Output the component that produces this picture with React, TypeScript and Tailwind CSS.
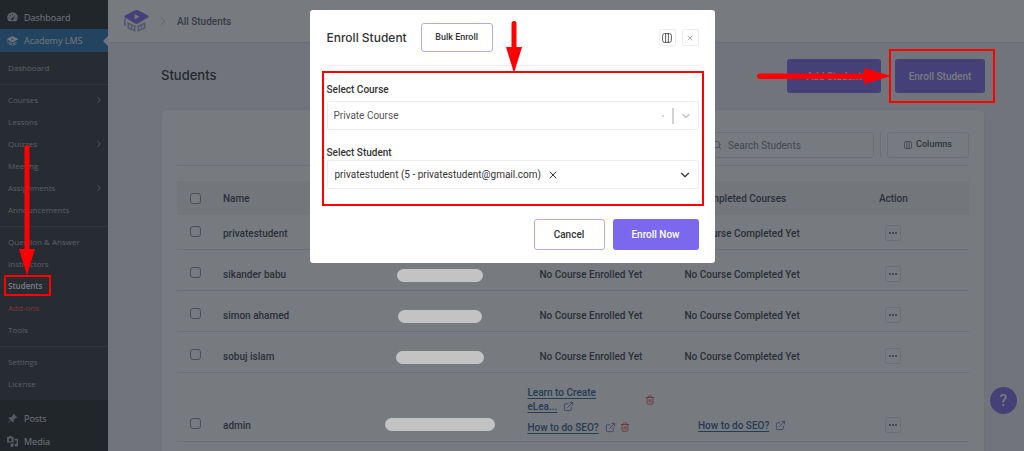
import { useState } from "react";
import { ChevronDown, ChevronRight, ExternalLink, Search, Trash2, X } from "lucide-react";

type MenuItem = { label: string; more?: boolean; current?: boolean; accent?: boolean };

const menuGroups: MenuItem[][] = [
	[{ label: "Dashboard" }],
	[
		{ label: "Courses", more: true },
		{ label: "Lessons" },
		{ label: "Quizzes", more: true },
		{ label: "Meeting" },
		{ label: "Assignments", more: true },
		{ label: "Announcements" },
	],
	[
		{ label: "Question & Answer" },
		{ label: "Instructors" },
		{ label: "Students", current: true },
		{ label: "Add-ons", accent: true },
		{ label: "Tools" },
	],
	[{ label: "Settings" }, { label: "License" }],
];

const students = [
	{ name: "privatestudent", mask: "", enrolled: "" },
	{ name: "sikander babu", mask: "w-[86px]", enrolled: "No Course Enrolled Yet" },
	{ name: "simon ahamed", mask: "w-[84px]", enrolled: "No Course Enrolled Yet" },
	{ name: "sobuj islam", mask: "w-[88px]", enrolled: "No Course Enrolled Yet" },
];

function Logo({ className, mono }: { className: string; mono?: boolean }) {
	const cap = mono ? "#f0f0f1" : "#7b68ee";
	const book = mono ? "#c3d3e3" : "#a9a8cc";
	return (
		<svg viewBox="0 0 25 22" className={className}>
			<path d="M10.5 0.6Q12.5-0.4 14.5 0.6L24 5.6Q25.4 6.6 24 7.6L14 13.4Q12.5 14.2 11 13.4L1 7.6Q-0.4 6.6 1 5.6Z" fill={cap} />
			<path d="M10.6 4 15.4 6.8 10.6 9.6Z" fill={mono ? "#2271b1" : "#fff"} />
			<path d="M0.9 8.5v7.5" stroke={cap} strokeWidth="1.1" />
			<path
				fillRule="evenodd"
				d="M3.5 12 11.6 15.8V21.8L3.5 18.6ZM5.3 14.6V17.4L7 18.1V15.4ZM8.4 16.1V18.7L10 19.3V16.9Z"
				fill={book}
			/>
			<path
				fillRule="evenodd"
				d="M13.4 15.8 21.5 12V18.6L13.4 21.8ZM15 16.9V19.3L16.7 18.7V16.1ZM18.1 15.4V18.1L19.8 17.4V14.6Z"
				fill={book}
			/>
		</svg>
	);
}

function ColumnsIcon({ className }: { className: string }) {
	return (
		<svg viewBox="0 0 10 10" className={className} fill="none" stroke="currentColor" strokeWidth="0.8">
			<rect x="0.6" y="0.6" width="8.8" height="8.8" rx="2" />
			<path d="M3.6 0.6v8.8M6.4 0.6v8.8" />
		</svg>
	);
}

function DownArrow({ className, height }: { className: string; height: number }) {
	return (
		<svg viewBox={`0 0 16 ${height}`} className={className} fill="#ff0000">
			<rect x="5.5" y="0" width="5" height={height - 20} rx="2.5" />
			<path d={`M0 ${height - 26}H16L8 ${height}Z`} />
		</svg>
	);
}

function Sidebar() {
	return (
		<aside className="w-[108px] shrink-0 bg-[#1d2327] pt-1.5 font-['Open_Sans','Noto_Sans',sans-serif] text-[#f0f0f1]">
			<a href="#" className="flex h-[23px] items-center gap-1.5 pl-[7px] text-[9px]">
				<svg viewBox="0 0 20 20" className="size-[11px] text-[#c3c4c7]" fill="currentColor">
					<path
						fillRule="evenodd"
						d="M3.8 17A9.5 9.5 0 1 1 16.2 17ZM10 3.5a1.2 1.2 0 1 0 0 2.4 1.2 1.2 0 0 0 0-2.4ZM5.5 5.4a1.2 1.2 0 1 0 0 2.4 1.2 1.2 0 0 0 0-2.4ZM3.6 9.8a1.2 1.2 0 1 0 0 2.4 1.2 1.2 0 0 0 0-2.4ZM16.4 9.8a1.2 1.2 0 1 0 0 2.4 1.2 1.2 0 0 0 0-2.4ZM15 5.5 9 11.2a2 2 0 1 0 2.4 2.4Z"
					/>
				</svg>
				Dashboard
			</a>
			<a href="#" className="relative flex h-[23px] items-center gap-1.5 bg-[#2271b1] pl-[7px] text-[9px]">
				<Logo className="h-[10px] w-[11px]" mono />
				Academy LMS
				<span className="absolute right-0 border-y-[5px] border-r-[5px] border-y-transparent border-r-[#f0f0f4]" />
			</a>

			<nav className="bg-[#2c3338] pt-px text-[8px] text-[#b4b7ba]">
				{menuGroups.map((group, i) => (
					<ul key={i} className="border-b border-[#464b50] pt-1 pb-[5px] last:border-b-0">
						{group.map((item) => (
							<li key={item.label} className="relative">
								<a
									href="#"
									className={
										item.current
											? "flex h-[22px] items-center px-2 font-semibold text-white"
											: item.accent
												? "flex h-[22px] items-center px-2 text-[#f0553f]"
												: "flex h-[22px] items-center justify-between px-2"
									}
								>
									{item.label}
									{item.more && <ChevronRight className="-mr-1 size-2.5" strokeWidth={2} />}
								</a>
								{item.current && (
									<>
										<span className="absolute top-0 left-1 z-20 h-[21px] w-[47px] border-2 border-[#ff0000]" />
										<DownArrow height={130} className="absolute bottom-full left-[19px] z-20 h-[130px] w-4" />
									</>
								)}
							</li>
						))}
					</ul>
				))}
			</nav>

			<div className="pt-[7px] text-[9px]">
				<a href="#" className="flex h-[23px] items-center gap-1.5 pl-[7px]">
					<svg viewBox="0 0 20 20" className="size-[11px] text-[#a7aaad]" fill="currentColor">
						<path d="M10.4 3.2 12 1.5 18.5 8l-1.7 1.6-1.4-.3-3.2 3.2.2 3.3-1.5 1.5-3.6-3.6L2 18.5 1.5 18l4.8-5.3L2.7 9.1l1.5-1.5 3.3.2L10.7 4.6Z" />
					</svg>
					Posts
				</a>
				<a href="#" className="flex h-[23px] items-center gap-1.5 pl-[7px]">
					<svg viewBox="0 0 20 20" className="size-[11px] text-[#a7aaad]" fill="currentColor">
						<path fillRule="evenodd" d="M0 2h3l1-2h4l1 2h3v10H0ZM6 4a3 3 0 1 0 0 6 3 3 0 0 0 0-6Z" />
						<path d="M13.5 5H20v11.5a3 3 0 1 1-2.5-2.9V8h-4ZM12 13v4a3 3 0 1 1-2.5-2.9V13Z" />
					</svg>
					Media
				</a>
			</div>
		</aside>
	);
}

function CourseLink({ children }: { children: React.ReactNode }) {
	return (
		<a href="#" className="text-[#2c5a97]">
			<span className="underline underline-offset-2">{children}</span>
			<ExternalLink className="ml-1.5 inline size-[11px] text-[#6a6fc8]" strokeWidth={2} />
		</a>
	);
}

function MoreButton() {
	return (
		<button aria-label="More" className="inline-flex h-4 w-4 items-center justify-center gap-px rounded-xs border border-[#e2e2e8] align-bottom">
			<span className="size-0.5 rounded-full bg-[#555a68]" />
			<span className="size-0.5 rounded-full bg-[#555a68]" />
			<span className="size-0.5 rounded-full bg-[#555a68]" />
		</button>
	);
}

function Check({ label }: { label: string }) {
	return (
		<input
			type="checkbox"
			aria-label={label}
			className="mx-auto block size-[11px] appearance-none rounded-[3px] border border-[#8c8f94] bg-white"
		/>
	);
}

function Mask({ className }: { className: string }) {
	return <span className={`relative z-20 mx-auto block h-[13px] rounded-full bg-[#c3c3c3] ${className}`} />;
}

function StudentsTable() {
	return (
		<table className="mt-[15px] w-full table-fixed border-collapse text-center text-[10px] font-medium text-[#363c4a]">
			<thead>
				<tr className="h-[34px] bg-[#f3f4f7]">
					<th className="w-9"><Check label="Select all" /></th>
					<th className="pl-2.5 text-left font-medium">Name</th>
					<th className="font-medium" aria-label="Email" />
					<th className="font-medium" aria-label="Enrolled Courses" />
					<th className="font-medium">Completed Courses</th>
					<th className="font-medium">Action</th>
				</tr>
			</thead>
			<tbody>
				{students.map((student, i) => (
					<tr key={student.name} className={`border-b border-[#e2e4ea] align-bottom ${i === 0 ? "h-[34px]" : "h-[41px]"}`}>
						<td className="pb-3"><Check label={student.name} /></td>
						<td className="pb-2 pl-2.5 text-left">{student.name}</td>
						<td className="pb-2">{student.mask && <Mask className={student.mask} />}</td>
						<td className="pb-2">{student.enrolled}</td>
						<td className="pb-2">No Course Completed Yet</td>
						<td className="pb-2"><MoreButton /></td>
					</tr>
				))}
				<tr className="h-[69px] border-b border-[#e2e4ea] align-bottom">
					<td className="pb-3"><Check label="admin" /></td>
					<td className="pb-2 pl-2.5 text-left">admin</td>
					<td className="pb-2.5"><Mask className="w-[110px]" /></td>
					<td className="pb-1.5 pl-3 text-left">
						<div className="flex items-center">
							<div className="w-[118px] pr-8 leading-[14px]">
								<CourseLink>Learn to Create eLea...</CourseLink>
							</div>
							<Trash2 className="size-[10px] text-[#e0453c]" strokeWidth={2} />
						</div>
						<div className="mt-1.5 flex items-center gap-1">
							<CourseLink>How to do SEO?</CourseLink>
							<Trash2 className="size-[10px] text-[#e0453c]" strokeWidth={2} />
						</div>
					</td>
					<td className="pb-2"><CourseLink>How to do SEO?</CourseLink></td>
					<td className="pb-2"><MoreButton /></td>
				</tr>
			</tbody>
		</table>
	);
}

function EnrollModal() {
	const [course, setCourse] = useState("Private Course");

	return (
		<div className="fixed inset-0 z-10 flex items-start justify-center bg-[#23292e]/62 pt-2.5">
			<div role="dialog" aria-label="Enroll Student" className="w-[405px] rounded-[3px] bg-white pr-4 pb-[13px] pl-[17px] text-[#333]">
				{/* Header */}
				<div className="flex h-14 items-center border-b border-[#f0f0f3]">
					<h2 className="font-[Inter,sans-serif] text-[12px] font-medium">Enroll Student</h2>
					<button className="ml-3.5 h-[29px] w-[72px] rounded-[3px] border border-[#b3aaf5] text-[9px] font-medium">
						Bulk Enroll
					</button>
					<button aria-label="Columns" className="ml-auto flex size-[17px] items-center justify-center rounded-xs border border-[#ececf0]">
						<ColumnsIcon className="size-[10px]" />
					</button>
					<button aria-label="Close" className="ml-1.5 flex size-[17px] items-center justify-center rounded-xs border border-[#ececf0] text-[#777]">
						<X className="size-2" strokeWidth={2} />
					</button>
				</div>

				{/* Fields */}
				<div className="relative -mx-[5px] mt-[5px] h-[135px] border-2 border-[#ff0000] px-[3px] pt-2.5">
					<DownArrow height={52} className="absolute bottom-full left-[182px] h-[52px] w-4" />
					<label htmlFor="course" className="block text-[10px] leading-[14px] font-medium">Select Course</label>
					<div className="mt-1 flex h-[29px] items-center rounded-xs border border-[#ececf0]">
						<select
							id="course"
							value={course}
							onChange={(e) => setCourse(e.target.value)}
							className="grow appearance-none pl-1.5 text-[10px] text-[#555] outline-none"
						>
							<option>Private Course</option>
						</select>
						<span className="size-0.5 rounded-full bg-[#c9c9cf]" />
						<span className="ml-2 h-4 w-0.5 bg-[#cfd3de]" />
						<ChevronDown className="mx-1.5 size-3 text-[#c4c4c9]" strokeWidth={3} />
					</div>
					<label htmlFor="student" className="mt-4 block text-[10px] leading-[14px] font-medium">Select Student</label>
					<div className="flex h-[29px] items-center rounded-xs border border-[#ececf0]">
						<select id="student" className="field-sizing-content appearance-none pl-[7px] text-[10px] outline-none">
							<option>privatestudent (5 - privatestudent@gmail.com)</option>
						</select>
						<button aria-label="Remove student" className="ml-1.5">
							<X className="size-3" strokeWidth={2} />
						</button>
						<ChevronDown className="mr-1.5 ml-auto size-3.5" strokeWidth={2} />
					</div>
				</div>

				{/* Footer */}
				<div className="mt-[13px] flex justify-end gap-2 text-[10px] font-medium">
					<button className="h-[31px] w-[71px] rounded-[3px] border border-[#b3aaf5]">Cancel</button>
					<button className="h-[31px] w-[86px] rounded-[3px] bg-[#7b68ee] text-white">Enroll Now</button>
				</div>
			</div>
		</div>
	);
}

export default function App() {
	return (
		<div className="flex h-screen overflow-hidden bg-[#f0f0f4] font-[Roboto,sans-serif]">
			<Sidebar />

			<div className="min-w-0 grow">
				<header className="flex h-[43px] items-center border-b border-[#e2e4ea] bg-white pl-4 text-[10px] font-medium text-[#555b66]">
					<Logo className="h-[22px] w-[25px]" />
					<ChevronRight className="mx-[7px] size-3.5 text-[#8f939b]" strokeWidth={1} />
					<a href="#">All Students</a>
				</header>

				<main className="pr-[39px] pl-[53px]">
					<div className="flex items-center justify-between py-4">
						<h1 className="font-[Inter,sans-serif] text-[13px] font-medium text-[#222835]">Students</h1>
						<div className="flex gap-3.5 text-[10px] font-medium text-white">
							<button className="h-[34px] w-[94px] rounded-[3px] bg-[#7b68ee]">Add Student</button>
							<div className="relative">
								<button className="h-[34px] w-[90px] rounded-[3px] bg-[#7b68ee]">Enroll Student</button>
								<span className="absolute -inset-y-2.5 -right-2.5 -left-1.5 z-20 border-2 border-[#ff0000]" />
								<svg viewBox="0 0 134 16" className="absolute top-[9px] right-full z-20 mr-1 h-4 w-[134px]" fill="#ff0000">
									<rect x="0" y="5.5" width="112" height="5.5" rx="2.7" />
									<path d="M107 0V16L134 8Z" />
								</svg>
							</div>
						</div>
					</div>

					<section className="rounded-md border border-[#e8e9ee] bg-white px-[15px] pt-[22px] pb-10">
						<div className="flex items-center justify-end border-b border-[#e8e9ee] pb-[7px]">
							<label className="flex h-[26px] w-[167px] items-center gap-1.5 rounded-[3px] border border-[#e2e4ea] px-1 text-[#777c88]">
								<Search className="size-2.5 shrink-0" />
								<input
									type="text"
									placeholder="Search Students"
									aria-label="Search Students"
									className="min-w-0 grow text-[10px] outline-none placeholder:text-[#777c88]"
								/>
							</label>
							<span className="mx-1.5 h-[26px] w-px bg-[#e2e4ea]" />
							<button className="flex h-[26px] w-[82px] items-center justify-center gap-1 rounded-[3px] border border-[#e2e4ea] text-[9px] font-medium text-[#444a57]">
								<ColumnsIcon className="size-2" />
								Columns
							</button>
						</div>
						<StudentsTable />
					</section>
				</main>
			</div>

			<button
				aria-label="Help"
				className="fixed right-[7px] bottom-[37px] flex size-[27px] items-center justify-center rounded-full bg-[#7b68ee] text-[16px] font-medium text-white"
			>
				?
			</button>

			<EnrollModal />
		</div>
	);
}
